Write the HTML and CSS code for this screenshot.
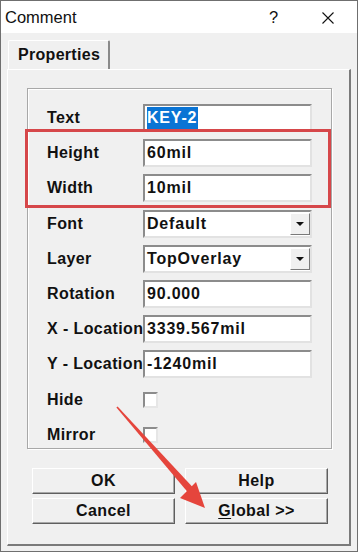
FILE: index.html
```html
<!DOCTYPE html>
<html lang="en">
<head>
  <meta charset="UTF-8">
  <title>Comment</title>
  <link rel="stylesheet" href="styles.css">
</head>
<body>
  <div class="window">
    <div class="titlebar">
      <span class="title">Comment</span>
      <span class="help">?</span>
      <svg class="close" width="12" height="12" viewBox="0 0 12 12">
        <path d="M0.5 0.5 L11.5 11.5 M11.5 0.5 L0.5 11.5" stroke="#111" stroke-width="1.1" fill="none"/>
      </svg>
    </div>

    <div class="tabs">
      <div class="tab">Properties</div>
    </div>

    <div class="panel">
      <div class="group">
        <div class="lbl">Text</div>
        <div class="field"><span class="sel">KEY-2</span></div>

        <div class="lbl">Height</div>
        <div class="field">60mil</div>

        <div class="lbl">Width</div>
        <div class="field">10mil</div>

        <div class="lbl">Font</div>
        <div class="field combo"><span class="val">Default</span><span class="drop"><i></i></span></div>

        <div class="lbl">Layer</div>
        <div class="field combo"><span class="val">TopOverlay</span><span class="drop"><i></i></span></div>

        <div class="lbl">Rotation</div>
        <div class="field">90.000</div>

        <div class="lbl">X - Location</div>
        <div class="field">3339.567mil</div>

        <div class="lbl">Y - Location</div>
        <div class="field">-1240mil</div>

        <div class="lbl">Hide</div>
        <span class="check"></span>

        <div class="lbl">Mirror</div>
        <span class="check"></span>

        <!-- red annotation box -->
        <div class="mark"></div>
      </div>

      <div class="buttons">
        <button class="btn">OK</button>
        <button class="btn">Help</button>
        <button class="btn">Cancel</button>
        <button class="btn"><u>G</u>lobal &gt;&gt;</button>
      </div>
    </div>

    <!-- red annotation arrow -->
    <svg class="arrow" width="358" height="552" viewBox="0 0 358 552">
      <polygon points="116.4,407.6 117.6,406.4 193,487.5 188,492.5" fill="#e5453c"/>
      <polygon points="205,508 180,498 196,482" fill="#e5453c"/>
    </svg>
  </div>
</body>
</html>
```

FILE: styles.css
```css
* {
  box-sizing: border-box;
  margin: 0;
  padding: 0;
}

body {
  width: 358px;
  height: 552px;
  overflow: hidden;
  font-family: "Liberation Sans", Arial, sans-serif;
  color: #111;
}

.window {
  position: relative;
  width: 358px;
  height: 552px;
  border: 1px solid #6f6f6f;
  background: #f0f0f0;
}

/* title bar */
.titlebar {
  height: 32px;
  background: #fff;
  display: flex;
  align-items: center;
  padding-left: 4px;
  font-size: 16.5px;
}

.title {
  flex: 1;
}

.help {
  width: 9px;
  margin-right: 44px;
}

.close {
  margin-right: 23px;
  margin-top: 1px;
}

/* tab strip */
.tabs {
  padding: 7px 0 0 7px;
  height: 36px;
}

.tab {
  position: relative;
  z-index: 1;
  width: 102px;
  height: 29px;
  padding: 5px 0 0 9px;
  font-size: 16px;
  font-weight: bold;
  letter-spacing: 0.3px;
  background: #f0f0f0;
  border-top: 1px solid #fff;
  border-left: 1px solid #fff;
  border-right: 2px solid #8a8a8a;
  border-radius: 2px 2px 0 0;
}

.panel {
  margin: 0 6px 0 6px;
  height: 477px;
  border-top: 1px solid #fff;
  border-left: 1px solid #fff;
  border-right: 2px solid #7a7a7a;
  border-bottom: 2px solid #7a7a7a;
  padding: 18px 0 0 19px;
}

/* group box */
.group {
  position: relative;
  width: 305px;
  height: 361px;
  border: 1px solid #a8a8a8;
  box-shadow: 1px 1px 0 #fff, inset 1px 1px 0 #fff;
  padding: 15px 0 0 19px;
  display: grid;
  grid-template-columns: 96px 169px;
  grid-auto-rows: 28px;
  row-gap: 7.2px;
  align-items: center;
}

.lbl {
  font-size: 16px;
  font-weight: bold;
  letter-spacing: 0.4px;
  white-space: nowrap;
}

.field {
  height: 28px;
  background: #fff;
  border: 2px solid;
  border-color: #8c8c8c #e2e2e2 #e2e2e2 #8c8c8c;
  padding-left: 2px;
  font-size: 16px;
  font-weight: bold;
  letter-spacing: 0.8px;
  line-height: 24px;
  white-space: nowrap;
  overflow: hidden;
}

.sel {
  display: inline-block;
  background: #0a74d4;
  color: #fff;
  line-height: 22px;
  padding-right: 1px;
}

.combo {
  display: flex;
  align-items: center;
}

.val {
  flex: 1;
}

.drop {
  width: 20px;
  height: 22px;
  background: #f0f0f0;
  border: 1px solid;
  border-color: #fff #7a7a7a #7a7a7a #fff;
  display: flex;
  align-items: center;
  justify-content: center;
}

.drop i {
  width: 0;
  height: 0;
  border-left: 4px solid transparent;
  border-right: 4px solid transparent;
  border-top: 4px solid #111;
}

.check {
  width: 15px;
  height: 16px;
  background: #fff;
  border: 2px solid;
  border-color: #8c8c8c #e6e6e6 #e6e6e6 #8c8c8c;
}

.mark {
  position: absolute;
  left: -3px;
  top: 40px;
  width: 306px;
  height: 79px;
  border: 3px solid #d6474a;
}

/* buttons */
.buttons {
  margin: 19px 0 0 5px;
  display: grid;
  grid-template-columns: 143px 143px;
  grid-auto-rows: 26px;
  column-gap: 10px;
  row-gap: 4px;
}

.btn {
  font-family: "Liberation Sans", Arial, sans-serif;
  font-size: 16px;
  font-weight: bold;
  letter-spacing: 0.4px;
  color: #111;
  background: #f0f0f0;
  border: 1px solid;
  border-color: #fff #5f5f5f #5f5f5f #fff;
  box-shadow: inset -1px -1px 0 #a8a8a8;
}

.btn u {
  text-underline-offset: 2px;
}

.arrow {
  position: absolute;
  left: -1px;
  top: -1px;
  pointer-events: none;
}
```
